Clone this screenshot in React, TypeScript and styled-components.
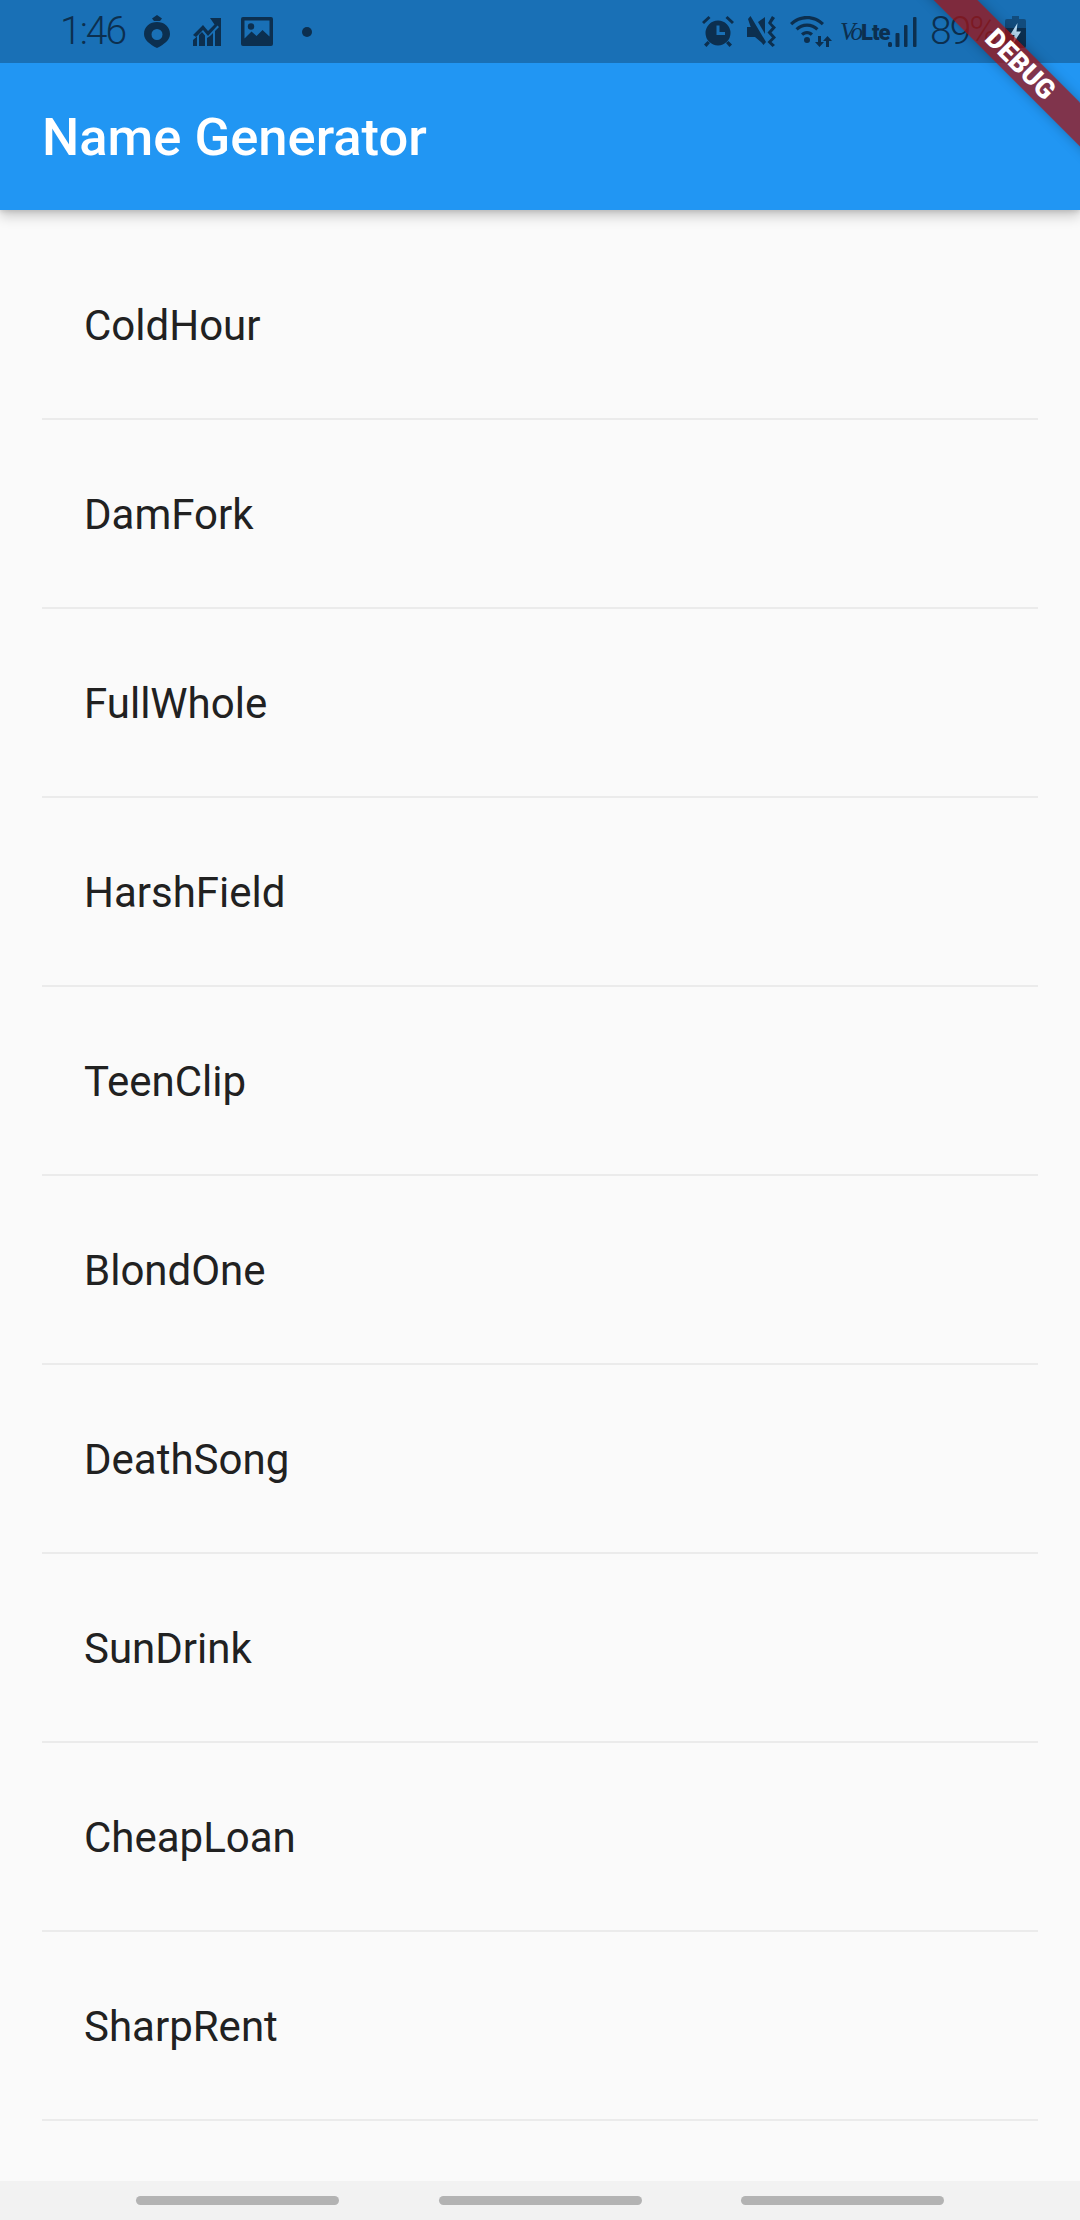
import React from 'react';
import styled, { createGlobalStyle } from 'styled-components';

const INK = '#0c2f4f';

const names = [
  'ColdHour',
  'DamFork',
  'FullWhole',
  'HarshField',
  'TeenClip',
  'BlondOne',
  'DeathSong',
  'SunDrink',
  'CheapLoan',
  'SharpRent',
];

const GlobalStyle = createGlobalStyle`
  html, body {
    margin: 0;
    padding: 0;
    background: #fafafa;
  }
  * {
    box-sizing: border-box;
  }
`;

const Screen = styled.div`
  position: relative;
  width: 1080px;
  height: 2220px;
  display: flex;
  flex-direction: column;
  overflow: hidden;
  background: #fafafa;
  font-family: Roboto, 'Liberation Sans', sans-serif;
`;

const Header = styled.header`
  flex: none;
  position: relative;
  z-index: 1;
  background: #2196f3;
  box-shadow: 0 6px 12px rgba(0, 0, 0, 0.2), 0 2px 4px rgba(0, 0, 0, 0.1);
`;

const StatusBar = styled.div`
  height: 63px;
  padding: 0 54px 0 60px;
  display: flex;
  align-items: center;
  justify-content: space-between;
  background: #1970b6;
  color: ${INK};
`;

const StatusGroup = styled.div`
  display: flex;
  align-items: center;
`;

const Clock = styled.span<{ $gap?: number; $width: number }>`
  flex: none;
  width: ${(p) => p.$width}px;
  margin-left: ${(p) => p.$gap ?? 0}px;
  font-size: 39px;
  font-weight: 300;
  letter-spacing: -2px;
  line-height: 63px;
  white-space: nowrap;
`;

const Glyph = styled.svg<{ $gap?: number }>`
  flex: none;
  display: block;
  margin-left: ${(p) => p.$gap ?? 0}px;
  fill: ${INK};
`;

const Volte = styled.span`
  flex: none;
  margin-left: 8px;
  width: 42px;
  display: flex;
  align-items: baseline;
  white-space: nowrap;
  line-height: 1;
`;

const VolteVo = styled.span`
  font-family: 'Liberation Serif', serif;
  font-style: italic;
  font-size: 25px;
  letter-spacing: -2px;
`;

const VolteLte = styled.span`
  font-family: Roboto, sans-serif;
  font-weight: 900;
  font-size: 22px;
  letter-spacing: -1px;
`;

const AppBar = styled.div`
  height: 147px;
  padding: 2px 0 0 42px;
  display: flex;
  align-items: center;
`;

const Title = styled.h1`
  margin: 0;
  color: #fff;
  font-size: 52.5px;
  font-weight: 500;
  line-height: 1;
`;

const List = styled.main`
  flex: 1;
  padding: 21px 42px 0;
`;

const Row = styled.div`
  height: 189px;
  padding: 1px 42px 0;
  display: flex;
  align-items: center;
  border-bottom: 2px solid #ebebeb;
  color: #212121;
  font-size: 42px;
`;

const NavBar = styled.nav`
  flex: none;
  height: 39px;
  padding: 15px 136px 0;
  display: flex;
  justify-content: space-between;
  align-items: flex-start;
  background: #f2f2f2;
`;

const NavPill = styled.span`
  width: 203px;
  height: 9px;
  border-radius: 5px;
  background: #b3b3b3;
`;

const Ribbon = styled.div`
  position: absolute;
  z-index: 2;
  left: 868px;
  top: 47px;
  width: 300px;
  height: 31px;
  padding-left: 6px;
  display: flex;
  align-items: center;
  justify-content: center;
  transform: rotate(45deg);
  background: rgba(160, 19, 20, 0.75);
  box-shadow: 0 0 12px rgba(0, 0, 0, 0.25);
  color: #fff;
  font-size: 27px;
  font-weight: 900;
  line-height: 1;
`;

const TimerIcon = () => (
  <Glyph $gap={21} width="26" height="33" viewBox="0 0 26 33">
    <path d="M13 0l5 3.500-2 2.500h-6l-2-2.500zM13 7c7 0 13 4.500 13 12 0 6-6 10.500-13 14C6 29.500 0 25 0 19 0 11.500 6 7 13 7zm0 7a5.500 5.500 0 1 0 0 11 5.500 5.500 0 0 0 0-11z" fillRule="evenodd" />
  </Glyph>
);

const ChartIcon = () => (
  <Glyph $gap={23} width="28" height="28" viewBox="0 0 28 28">
    <path d="M17 0h11v11l-3.500-3.500L15 18l-5-6-7 7-3-2 10-10 5 6 6.500-6.500z" />
    <path d="M0 22l4-3.500V28H0zM6 17l3-3 3 3.500V28H6zM14 20l3-2 3-3V28h-6zM22 13l6-6V28h-6z" />
  </Glyph>
);

const ImageIcon = () => (
  <Glyph $gap={20} width="32" height="29" viewBox="0 0 32 29">
    <path d="M2 0h28a2 2 0 0 1 2 2v25a2 2 0 0 1-2 2H2a2 2 0 0 1-2-2V2a2 2 0 0 1 2-2zm1.500 3.500v18l7-7 5 4.500 6-6 7 6.500V3.500z" fillRule="evenodd" />
    <circle cx="10" cy="9.500" r="3.200" />
  </Glyph>
);

const DotIcon = () => (
  <Glyph $gap={29} width="10" height="10" viewBox="0 0 10 10">
    <circle cx="5" cy="5" r="5" />
  </Glyph>
);

const AlarmIcon = () => (
  <Glyph width="32" height="31" viewBox="0 0 32 31">
    <path d="M16 4.500a12.500 12.500 0 1 1 0 25 12.500 12.500 0 0 1 0-25zM14.500 9.500V19H23v-3h-5.500V9.500z" fillRule="evenodd" />
    <path d="M6.500 0l2 2L2 8 0 6zM25.500 0l6.500 6-2 2-6.500-6zM5.500 25l2.500 2-3.500 4L2 28.500zM26.500 25l3.500 3.500-2.500 2.500-3.500-4z" />
  </Glyph>
);

const MuteIcon = () => (
  <Glyph $gap={13} width="31" height="31" viewBox="0 0 31 31">
    <path d="M0 11h4l-.5-.5L1 3l2.500-3L19 26l-2.500 3-2-2.500L8 21H0z" />
    <path d="M11 6l7-5v17z" />
    <path d="M25 0l3 2-3.500 5 4.500 4.500-4.500 5 4.500 5-4.500 4.500 3.500 3-2.500 2-5-5 4.500-4.500-4.500-5 4.500-5-4-4.500z" />
  </Glyph>
);

const WifiIcon = () => (
  <Glyph $gap={12} width="42" height="32" viewBox="0 0 42 32">
    <path d="M17 0c6.500 0 12.500 2.500 17 7l-2.200 2.200C27.900 5.500 22.700 3.200 17 3.200S6.100 5.500 2.200 9.200L0 7C4.500 2.500 10.500 0 17 0z" />
    <path d="M17 7.500c4.500 0 8.500 1.800 11.500 4.700l-2.200 2.200C23.900 12.100 20.600 10.700 17 10.700s-6.900 1.400-9.300 3.700l-2.200-2.200C8.500 9.300 12.500 7.500 17 7.500z" />
    <path d="M17 15c2.500 0 4.500 1 6 2.500L20.800 19.700C19.800 18.800 18.500 18.200 17 18.200s-2.800.6-3.800 1.500L11 17.500C12.500 16 14.500 15 17 15z" />
    <circle cx="17" cy="24" r="3" />
    <path d="M25 21h3v6h3l-4.500 5-4.500-5h3zM36 32h-3v-6h-3l4.500-5 4.500 5h-3z" transform="translate(3 -1)" />
  </Glyph>
);

const SignalIcon = () => (
  <Glyph $gap={6} width="29" height="30" viewBox="0 0 29 30">
    <rect x="0" y="25" width="4" height="5" rx="1.500" />
    <rect x="7.500" y="16" width="4" height="14" rx="1" />
    <rect x="16" y="8" width="3.500" height="22" rx="1" />
    <rect x="25" y="0" width="3.500" height="30" rx="1" />
  </Glyph>
);

const BatteryIcon = () => (
  <Glyph $gap={10} width="21" height="32" viewBox="0 0 21 32">
    <path d="M7 0h7v3H7z" opacity="0.55" />
    <path d="M2 3h17a2 2 0 0 1 2 2v7H0V5a2 2 0 0 1 2-2z" opacity="0.55" />
    <path d="M0 12h21v18a2 2 0 0 1-2 2H2a2 2 0 0 1-2-2z" />
    <path d="M12.500 7L5 19h4.500L8 28l8-12.500h-4.500z" fill="#b9dcf5" />
  </Glyph>
);

export default function App() {
  return (
    <Screen>
      <GlobalStyle />
      <Header>
        <StatusBar>
          <StatusGroup>
            <Clock $width={63}>1:46</Clock>
            <TimerIcon />
            <ChartIcon />
            <ImageIcon />
            <DotIcon />
          </StatusGroup>
          <StatusGroup>
            <AlarmIcon />
            <MuteIcon />
            <WifiIcon />
            <Volte>
              <VolteVo>Vo</VolteVo>
              <VolteLte>Lte</VolteLte>
            </Volte>
            <SignalIcon />
            <Clock $gap={13} $width={65}>
              89%
            </Clock>
            <BatteryIcon />
          </StatusGroup>
        </StatusBar>
        <AppBar>
          <Title>Name Generator</Title>
        </AppBar>
      </Header>
      <List>
        {names.map((name) => (
          <Row key={name}>{name}</Row>
        ))}
      </List>
      <NavBar>
        <NavPill />
        <NavPill />
        <NavPill />
      </NavBar>
      <Ribbon>DEBUG</Ribbon>
    </Screen>
  );
}
